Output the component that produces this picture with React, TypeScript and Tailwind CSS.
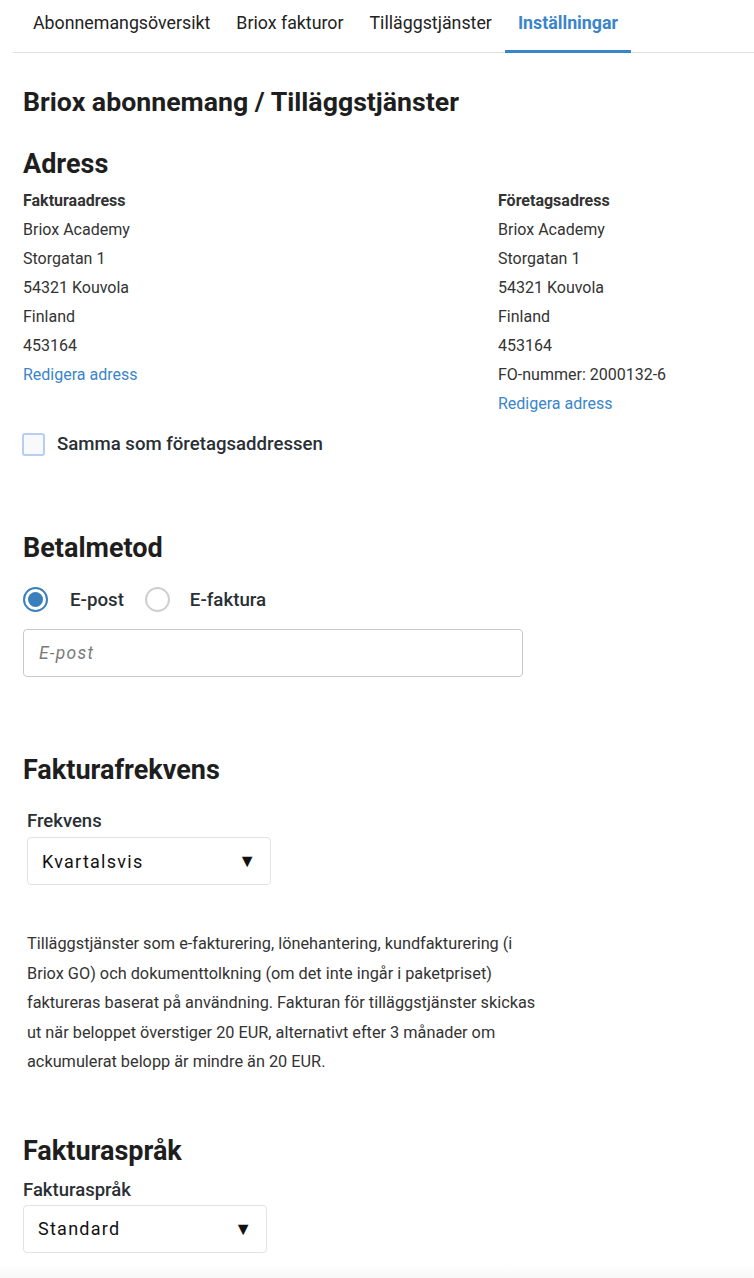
const tabs = ['Abonnemangsöversikt', 'Briox fakturor', 'Tilläggstjänster', 'Inställningar']

const AddressBlock = ({ title, lines }: { title: string; lines: string[] }) => (
  <div className="flex flex-col">
    <div className="h-[29px] text-[16px] font-bold leading-[29px] text-[#333]">{title}</div>
    {lines.map((l) => (
      <div key={l} className="h-[29px] text-[16px] leading-[29px] text-[#333]">
        {l}
      </div>
    ))}
    <a className="h-[29px] text-[16px] leading-[29px] text-[#3a85c9]">Redigera adress</a>
  </div>
)

const Select = ({ value }: { value: string }) => (
  <div className="flex h-[48px] w-[244px] items-center justify-between rounded-[4px] border border-[#e3e3e3] pl-[14px] pr-[14px]">
    <span className="text-[18px] tracking-[0.07em] text-[#111]">{value}</span>
    <span className="text-[18px] leading-none text-[#111]">▼</span>
  </div>
)

export default function App() {
  const address = ['Briox Academy', 'Storgatan 1', '54321 Kouvola', 'Finland', '453164']
  return (
    <div className="min-h-[1278px] bg-white font-['Roboto',sans-serif]">
      {/* Tabs */}
      <nav className="ml-[13px] flex h-[53px] border-b border-[#e2e2e2] pl-[7px]">
        {tabs.map((t, i) => {
          const active = i === tabs.length - 1
          return (
            <div
              key={t}
              className={
                active
                  ? 'flex h-[53px] items-start border-b-[3px] border-[#3a85c9] px-[13px] pt-[10px] text-[17.8px] font-bold text-[#3a85c9]'
                  : 'flex h-[53px] items-start px-[13px] pt-[10px] text-[17.8px] text-[#222]'
              }
            >
              {t}
            </div>
          )
        })}
      </nav>

      <main className="px-[23px]">
        <h1 className="mt-[33px] text-[26.7px] font-bold leading-[32px] text-[#1e1e1e]">
          Briox abonnemang / Tilläggstjänster
        </h1>

        {/* Adress */}
        <h2 className="mt-[29px] text-[27px] font-bold leading-[34px] text-[#1e1e1e]">Adress</h2>
        <div className="mt-[5px] grid grid-cols-[475px_1fr]">
          <AddressBlock title="Fakturaadress" lines={address} />
          <AddressBlock title="Företagsadress" lines={[...address, 'FO-nummer: 2000132-6']} />
        </div>

        <label className="mt-[14px] flex items-center gap-[12px]">
          <span className="ml-[-1px] h-[23px] w-[23px] rounded-[3px] border-2 border-[#b6cff0] bg-[#f8f9fa]" />
          <span className="text-[18.6px] font-medium leading-[24px] text-[#2a2f35]">
            Samma som företagsaddressen
          </span>
        </label>

        {/* Betalmetod */}
        <h2 className="mt-[75px] text-[27px] font-bold leading-[34px] text-[#1e1e1e]">Betalmetod</h2>
        <div className="mt-[22px] flex items-center">
          <span className="flex h-[25px] w-[25px] items-center justify-center rounded-full border-[2px] border-[#3a7fbd]">
            <span className="h-[15px] w-[15px] rounded-full bg-[#3a7fbd]" />
          </span>
          <span className="ml-[22px] text-[18.7px] font-medium leading-[24px] text-[#2a2f35]">E-post</span>
          <span className="ml-[21px] h-[25px] w-[25px] rounded-full border-2 border-[#cfcfcf]" />
          <span className="ml-[20px] text-[18.7px] font-medium leading-[24px] text-[#2a2f35]">E-faktura</span>
        </div>
        <div className="mt-[17px] flex h-[48px] w-[500px] items-center rounded-[4px] border border-[#c9c9c9] pl-[15px]">
          <span className="text-[17.5px] italic tracking-[0.07em] text-[#7a7a7a]">E-post</span>
        </div>

        {/* Fakturafrekvens */}
        <h2 className="mt-[76px] text-[27px] font-bold leading-[34px] text-[#1e1e1e]">Fakturafrekvens</h2>
        <div className="ml-[4px]">
          <div className="mt-[22px] text-[18.5px] font-medium leading-[24px] text-[#2a2f35]">Frekvens</div>
          <div className="mt-[4px]">
            <Select value="Kvartalsvis" />
          </div>
          <p className="mt-[44px] w-[512px] text-[16.3px] leading-[29.5px] text-[#333]">
            Tilläggstjänster som e-fakturering, lönehantering, kundfakturering (i Briox GO) och
            dokumenttolkning (om det inte ingår i paketpriset) faktureras baserat på användning.
            Fakturan för tilläggstjänster skickas ut när beloppet överstiger 20 EUR, alternativt
            efter 3 månader om ackumulerat belopp är mindre än 20 EUR.
          </p>
        </div>

        {/* Fakturaspråk */}
        <h2 className="mt-[57px] text-[27px] font-bold leading-[34px] text-[#1e1e1e]">Fakturaspråk</h2>
        <div className="mt-[10px] text-[18.5px] font-medium leading-[24px] text-[#2a2f35]">Fakturaspråk</div>
        <div className="mt-[3px]">
          <Select value="Standard" />
        </div>
      </main>
      <div className="mt-[12px] h-[20px] bg-gradient-to-b from-white to-[#f4f4f4]" />
    </div>
  )
}
